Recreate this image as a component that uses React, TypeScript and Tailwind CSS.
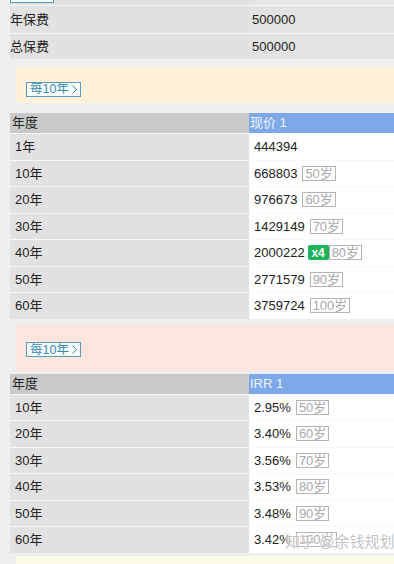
import React from "react";

const Tag = ({ t, ml = "ml-[5px]" }: { t: string; ml?: string }) => (
  <span
    className={`${ml} inline-flex h-[15px] items-center border border-[#b4b4b4] bg-white px-[2px] text-[13px] leading-none text-[#a9a9a9]`}
  >
    {t}
  </span>
);

const X4 = () => (
  <span className="ml-[3px] inline-flex h-[15px] w-[21px] items-center justify-center rounded-[2px] bg-[#1db35b] text-[12px] font-bold leading-none text-white">
    x4
  </span>
);

const Every = () => (
  <span className="inline-flex h-[15px] items-center gap-[3px] border border-[#5b9bb9] bg-[#f6fbfc] px-[3px] text-[12.5px] leading-none text-[#3f8bad]">
    每10年
    <svg width="5" height="9" viewBox="0 0 5 9" fill="none">
      <path d="M0.5 0.5 L4.5 4.5 L0.5 8.5" stroke="#3f8bad" strokeWidth="1" />
    </svg>
  </span>
);

type Row = { y: string; v: string; tag?: string; x4?: boolean };

const Header = ({ right }: { right: string }) => (
  <div className="ml-[10px] flex h-[20px] items-center">
    <div className="flex h-full w-[239px] items-center bg-[#c9c9c9] pl-[2px] text-[#222]">年度</div>
    <div className="flex h-full flex-1 items-center bg-[#7ea9e8] pl-[1px] text-[#eef4ff]">{right}</div>
  </div>
);

const DataRow = ({ r }: { r: Row }) => (
  <div className="ml-[10px] flex h-[26.5px] border-t border-[#f7f7f7]">
    <div className="flex h-full w-[239px] items-center bg-[#e2e2e2] pl-[5px]">{r.y}</div>
    <div className="flex h-full flex-1 items-center bg-white pl-[5px]">
      <span>{r.v}</span>
      {r.x4 && <X4 />}
      {r.tag && <Tag t={r.tag} ml={r.x4 ? "ml-0" : "ml-[5px]"} />}
    </div>
  </div>
);

const table1: Row[] = [
  { y: "1年", v: "444394" },
  { y: "10年", v: "668803", tag: "50岁" },
  { y: "20年", v: "976673", tag: "60岁" },
  { y: "30年", v: "1429149", tag: "70岁" },
  { y: "40年", v: "2000222", tag: "80岁", x4: true },
  { y: "50年", v: "2771579", tag: "90岁" },
  { y: "60年", v: "3759724", tag: "100岁" },
];

const table2: Row[] = [
  { y: "10年", v: "2.95%", tag: "50岁" },
  { y: "20年", v: "3.40%", tag: "60岁" },
  { y: "30年", v: "3.56%", tag: "70岁" },
  { y: "40年", v: "3.53%", tag: "80岁" },
  { y: "50年", v: "3.48%", tag: "90岁" },
  { y: "60年", v: "3.42%", tag: "100岁" },
];

export default function App() {
  return (
    <div className="relative h-[564px] w-[394px] overflow-hidden bg-[#efefef] font-['Liberation_Sans','Noto_Sans_CJK_SC',sans-serif] text-[13px] text-[#222]">
      {/* partial top row */}
      <div className="ml-[10px] flex h-[5px]">
        <div className="relative h-full w-[239px] overflow-hidden bg-[#e2e2e2]">
          <div className="absolute bottom-[2px] left-0 h-[8px] w-[44px] border border-[#5b9bb9] bg-[#f6fbfc]" />
        </div>
        <div className="h-full flex-1 bg-[#e6e6e6]" />
      </div>
      <div className="ml-[10px] flex h-[28px] border-t border-[#f7f7f7]">
        <div className="flex h-full w-[239px] items-center bg-[#e2e2e2]">年保费</div>
        <div className="flex h-full flex-1 items-center bg-[#e3e3e3] pl-[3px]">500000</div>
      </div>
      <div className="ml-[10px] flex h-[26px] border-t border-[#f7f7f7]">
        <div className="flex h-full w-[239px] items-center bg-[#e2e2e2]">总保费</div>
        <div className="flex h-full flex-1 items-center bg-[#e3e3e3] pl-[3px]">500000</div>
      </div>

      <div className="ml-[16px] mt-[8px] h-[36px] bg-[#fff1d9] pl-[10px] pt-[12px]">
        <Every />
      </div>

      <div className="mt-[10px]">
        <Header right="现价 1" />
        {table1.map((r) => (
          <DataRow key={r.y} r={r} />
        ))}
      </div>

      <div className="ml-[16px] mt-[6px] h-[46px] bg-[#fde6dd] pl-[10px] pt-[15px]">
        <Every />
      </div>

      <div className="mt-[3px]">
        <Header right="IRR 1" />
        {table2.map((r) => (
          <DataRow key={r.y} r={r} />
        ))}
      </div>

      <div className="ml-[16px] mt-[3px] h-[20px] bg-[#fbfbe8]" />

      <div className="pointer-events-none absolute left-[285px] top-[534px] whitespace-nowrap text-[15px] leading-none text-[rgba(140,140,140,0.55)] [text-shadow:0_0_2px_#fff,0_0_2px_#fff]">
        知乎 @余钱规划
      </div>
    </div>
  );
}
